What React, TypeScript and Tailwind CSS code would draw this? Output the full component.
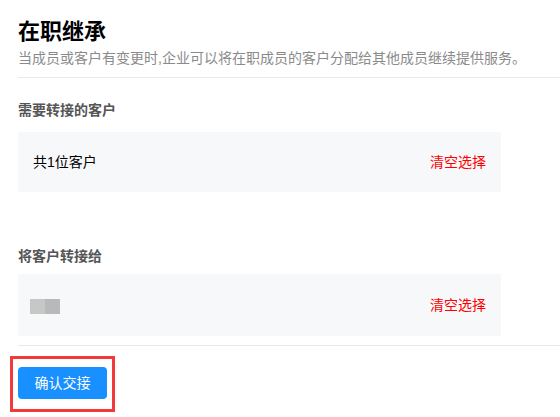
import React from "react";

export default function App() {
  return (
    <div
      className="relative w-[560px] h-[417px] overflow-hidden bg-white"
      style={{ fontFamily: '"Liberation Sans", "Noto Sans CJK SC", sans-serif' }}
    >
      <div className="pl-[18px]">
        <h1 className="pt-[16px] text-[22px] leading-[32px] font-bold text-black">在职继承</h1>
        <p className="text-[14px] leading-[20px] text-[#8a8a8a]">
          当成员或客户有变更时,企业可以将在职成员的客户分配给其他成员继续提供服务。
        </p>
        <div className="mt-[9px] border-t border-[#e8e8e8]" />

        <div className="mt-[22px] text-[14px] leading-[20px] font-semibold text-[#555]">需要转接的客户</div>
        <div className="mt-[12px] flex h-[60px] w-[483px] items-center justify-between bg-[#f7f8fa] px-[15px] text-[14px]">
          <span className="text-black">共1位客户</span>
          <span className="text-[#ff0000]">清空选择</span>
        </div>

        <div className="mt-[54px] text-[14px] leading-[20px] font-semibold text-[#555]">将客户转接给</div>
        <div className="mt-[8px] flex h-[62px] w-[483px] items-center justify-between bg-[#f7f8fa] pl-[12px] pr-[15px] text-[14px]">
          <div className="mt-[3px] flex h-[15px]">
            <div className="w-[15px] bg-[#c6c7c6]" />
            <div className="w-[15px] bg-[#b8baba]" />
          </div>
          <span className="text-[#ff0000]">清空选择</span>
        </div>
        <div className="mt-[9px] border-t border-[#e8e8e8]" />

        <div className="relative mt-[21px] w-[89px]">
          <button className="flex h-[32px] w-[89px] items-center justify-center rounded-[4px] bg-[#1890ff] text-[14px] text-white">
            确认交接
          </button>
          <div className="pointer-events-none absolute left-[-8px] top-[-11px] h-[56px] w-[105px] border-[3px] border-[#f33a3a]" />
        </div>
      </div>
    </div>
  );
}
